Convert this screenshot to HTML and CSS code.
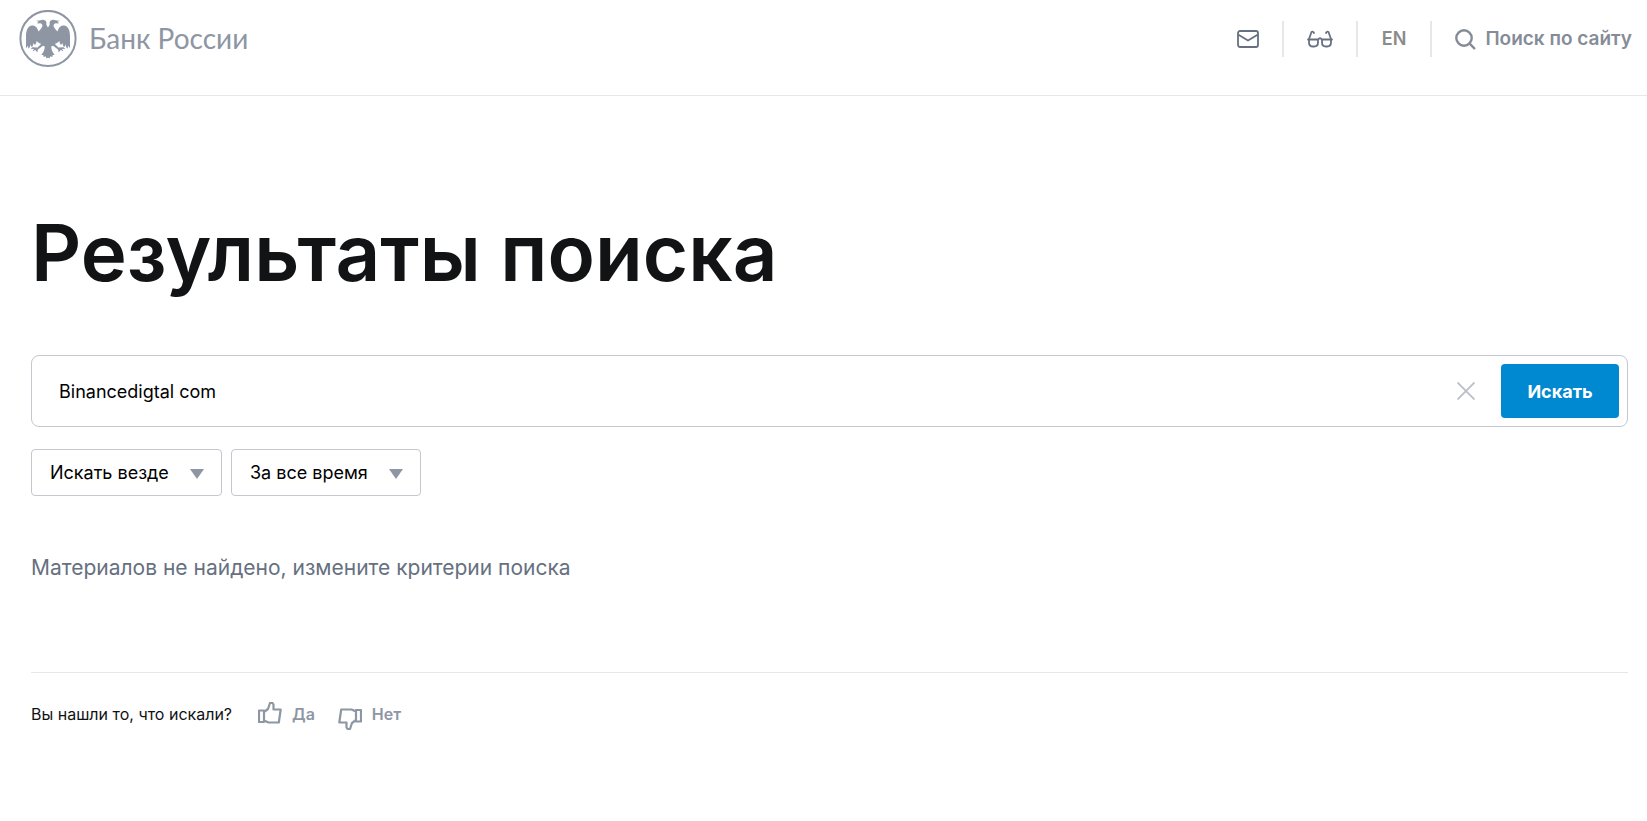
FILE: index.html
```html
<!DOCTYPE html>
<html lang="ru">
<head>
	<title>Результаты поиска | Банк России</title>
	<meta charset="utf-8">
	<meta name="viewport" content="width=device-width, initial-scale=1">
	<link rel="stylesheet" href="styles.css">
</head>
<body>
	<!--header start-->
	<header class="header">
		<a class="logo" href="#">
			<svg class="logo_sign" viewBox="0 0 58 58" aria-hidden="true">
				<circle cx="29" cy="28.500" r="27.600" fill="none" stroke="currentColor" stroke-width="2"/>
				<g id="eagle" fill="currentColor">
					<path d="M29 17.500C27.800 16 27 14.500 27.400 12.500C27 10.500 25 9.400 22.500 10L20.500 10.400L17 10.700L19.500 11.800L18 13.400L21.500 13.200C23.800 14 24 16 22.500 18C21.500 19.500 20.300 20.500 19.500 21.500C18.500 17.500 16 14.800 12.500 15.500C8.500 16.500 7 21 7 26V38C8 37.300 8.500 36.500 8.800 35.500C9 37 9.200 37.800 9.800 38.500C10.700 37.500 11.200 36 11.500 34.500C12 36 12.400 36.600 13 37C13.800 36 14.300 34.500 14.500 33C15 34 15.500 34.500 16.200 35C17 33.500 17.300 32.300 17.800 31C18.800 32.500 20.500 33.500 22.300 33.800L18.600 37.400L13.500 37.200L11.600 38.700L15 38.900L13.500 41.300L16.500 39.900L18.200 42.400L19 39.600L23.900 35.800L25.800 36.500C25.600 39.500 24.800 42 22.300 45L24.300 45L24.600 47L26.600 46.300L27.500 48.400L29 47.500Z"/>
				</g>
				<use href="#eagle" transform="translate(58 0) scale(-1 1)"/>
			</svg>
			<span class="logo_text">Банк России</span>
		</a>
		<nav class="tools">
			<a class="tool" href="#" aria-label="Написать">
				<svg width="22" height="18" viewBox="0 0 22 18" fill="none" stroke="currentColor" stroke-width="1.800" stroke-linejoin="round">
					<rect x="1" y="1" width="20" height="16" rx="2"/>
					<path d="M1 4.500L11 10.500L21 4.500"/>
				</svg>
			</a>
			<a class="tool" href="#" aria-label="Версия для слабовидящих">
				<svg width="26" height="18" viewBox="0 0 26 18" fill="none" stroke="currentColor" stroke-width="1.800" stroke-linecap="round" stroke-linejoin="round">
					<path d="M1 9.500H11V12.500Q11 16.500 7 16.500H6Q2 16.500 2 12.500V9.500M2 9L4.500 2Q6 1 7 3M25 9.500H15V12.500Q15 16.500 19 16.500H20Q24 16.500 24 12.500V9.500M24 9L21.500 2Q20 1 19 3M11 9.500Q13 7 15 9.500"/>
				</svg>
			</a>
			<a class="tool lang" href="#">EN</a>
			<a class="tool find" href="#">
				<svg width="21" height="21" viewBox="0 0 21 21" fill="none" stroke="currentColor" stroke-width="2.400" stroke-linecap="round">
					<circle cx="9" cy="9" r="7.700"/>
					<path d="M14.700 14.700L19.300 19.300"/>
				</svg>
				<span>Поиск по сайту</span>
			</a>
		</nav>
	</header>
	<!--end header-->

	<!--main start-->
	<main class="main">
		<h1 class="title">Результаты поиска</h1>
		<form class="search">
			<div class="search_line">
				<input class="search_input" type="text" aria-label="Поиск" value="Binancedigtal com">
				<button class="search_clear" type="reset" aria-label="Очистить">
					<svg width="18" height="18" viewBox="0 0 18 18" fill="none" stroke="currentColor" stroke-width="1.800">
						<path d="M.5 .5L17.500 17.500M17.500 .5L.5 17.500"/>
					</svg>
				</button>
				<button class="search_btn" type="submit">Искать</button>
			</div>
			<div class="filters">
				<label class="filter">
					<select aria-label="Где искать">
						<option>Искать везде</option>
					</select>
				</label>
				<label class="filter">
					<select aria-label="Период">
						<option>За все время</option>
					</select>
				</label>
			</div>
		</form>
		<p class="empty">Материалов не найдено, измените критерии поиска</p>
		<div class="poll">
			<span class="poll_text">Вы нашли то, что искали?</span>
			<button class="poll_btn" type="button">
				<svg width="24" height="22" viewBox="0 0 24 22" fill="none" stroke="currentColor" stroke-width="2.200" stroke-linejoin="round">
					<path d="M1 8.500H6V20H1ZM6 10L10 7L12 1H14.500L15.500 2.500V7.500H22.700L20.800 20.500H10.500L6 18.500"/>
				</svg>
				<span>Да</span>
			</button>
			<button class="poll_btn poll_no" type="button">
				<svg width="24" height="22" viewBox="0 0 24 22" fill="none" stroke="currentColor" stroke-width="2.200" stroke-linejoin="round">
					<path d="M23 13.500H18V2H23ZM18 12L14 15L12 21H9.500L8.500 19.500V14.500H1.300L3.200 1.500H13.500L18 3.500"/>
				</svg>
				<span>Нет</span>
			</button>
		</div>
	</main>
	<!--end main-->
</body>
</html>
```
FILE: styles.css
```css
*{margin:0;padding:0;box-sizing:border-box;}
body{font-size:18px;font-family:Inter,"Liberation Sans",sans-serif;color:#0f1214;background:#fff;}
a{color:inherit;text-decoration:none;}
button,input,select{font:inherit;color:inherit;border:0;background:none;}
button,select{cursor:pointer;}
svg{display:block;flex:none;}

/*header start*/
.header{display:flex;justify-content:space-between;align-items:flex-start;padding:10px 15px 27px 19px;border-bottom:1px solid #e6e7e9;}
.logo{display:flex;align-items:flex-start;gap:12px;color:#8e96a4;}
.logo_sign{width:58px;height:58px;}
.logo_text{margin-top:10px;font-family:Lato,"Noto Sans",sans-serif;font-size:28px;line-height:36px;}
.tools{display:flex;margin-top:11px;line-height:36px;}
.tool{display:flex;align-items:center;height:36px;padding:0 23px;color:#667080;border-left:2px solid #e6e7e9;}
.tool:first-child{border-left:0;}
.tool.lang{padding:0 24px;font-weight:600;color:#8b8b8b;}
.tool.find{gap:9px;padding-right:0;font-size:19px;font-weight:600;color:#858c97;}
/*end header*/

/*main start*/
.main{padding:109px 19px 40px 31px;}
.title{font-size:78px;line-height:96px;font-weight:600;color:#111315;}
.search{margin-top:54px;}
.search_line{display:flex;align-items:center;height:72px;padding:0 8px 0 27px;border:1px solid #c4c7cd;border-radius:8px;}
.search_input{flex:1;min-width:0;height:54px;color:#000;outline:none;}
.search_clear{padding:18px 26px;color:#b9bfca;}
.search_btn{width:118px;height:54px;border-radius:4px;background:#0088d0;color:#fff;font-weight:700;}
.filters{display:flex;flex-wrap:wrap;gap:9px;margin-top:22px;}
.filter{position:relative;}
.filter select{display:block;height:47px;padding:0 52px 0 18px;border:1px solid #c4c7cd;border-radius:4px;color:#000;appearance:none;}
.filter:after{content:"";position:absolute;right:18px;top:20px;border:7px solid transparent;border-top:10px solid #8e96a4;border-bottom:0;pointer-events:none;}
.empty{margin-top:56px;font-size:21px;line-height:32px;color:#667080;}
.poll{display:flex;align-items:flex-start;gap:23px;margin-top:88px;padding-top:29px;border-top:1px solid #e6e7e9;font-size:16px;line-height:24px;}
.poll_text{margin-right:3px;}
.poll_btn{display:flex;align-items:flex-start;gap:10px;font-weight:600;color:#8e96a4;}
.poll_no svg{margin-top:6px;}
/*end main*/
```
